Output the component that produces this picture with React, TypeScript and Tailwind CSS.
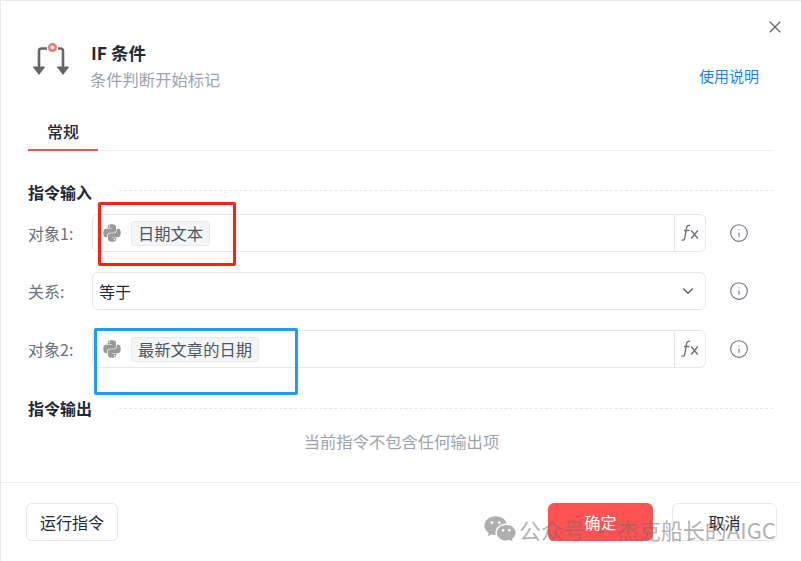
import React from "react";
import { Info, ChevronDown, X } from "lucide-react";
import { FaPython } from "react-icons/fa";
import { RiWechatFill } from "react-icons/ri";

const FxIcon = () => (
  <svg width="20" height="20" viewBox="0 0 20 20" fill="none" stroke="#6b7280" strokeWidth="1.400">
    <path d="M10 2.500c-2-.5-3.100.3-3.400 2L4.800 15c-.3 1.800-1.300 2.500-3.200 2" />
    <path d="M4 7.500h5.500" />
    <path d="M11.200 7.500l6.600 8M17.800 7.500l-6.600 8" />
  </svg>
);

const IfIcon = () => (
  <svg width="38" height="36" viewBox="0 0 38 36" fill="none">
    <path d="M6 28V9Q6 6.500 8.500 6.500H14" stroke="#666" strokeWidth="2.600" />
    <path d="M25 6.500h2.500Q30 6.500 30 9V28" stroke="#666" strokeWidth="2.600" />
    <path d="M-0.500 24.500h13L6 33zM23.500 24.500h13L30 33z" fill="#666" />
    <circle cx="19.500" cy="5.500" r="3.300" fill="#fff" stroke="#f87171" strokeWidth="2.400" />
  </svg>
);

const Tag = ({ text }: { text: string }) => (
  <div className="flex items-center">
    <FaPython className="ml-[2px] text-[20px] text-[#9a9a9a]" />
    <span className="ml-[9px] flex h-[25px] items-center rounded-[4px] border border-[#e9eaec] bg-[#f4f5f6] px-[6px] text-[16.3px] text-[#4b5563]">
      {text}
    </span>
  </div>
);

const Row = ({ label, children }: { label: string; children: React.ReactNode }) => (
  <div className="flex items-center">
    <div className="w-[64px] text-[16px] text-[#6b7280]">{label}</div>
    <div className="flex h-[38px] w-[614px] items-center rounded-[6px] border border-[#e5e7eb]">{children}</div>
    <Info size={20} strokeWidth={1.3} className="ml-[23px] text-[#6b7280]" />
  </div>
);

const TagInput = ({ text }: { text: string }) => (
  <>
    <div className="flex-1 pl-[7px]">
      <Tag text={text} />
    </div>
    <div className="flex h-full w-[31px] items-center justify-center border-l border-[#e5e7eb]">
      <FxIcon />
    </div>
  </>
);

export default function App() {
  return (
    <div
      className="relative h-[561px] w-[801px] overflow-hidden border-t border-l border-[#e5e7eb] bg-white"
      style={{ fontFamily: '"Noto Sans CJK SC", "Liberation Sans", sans-serif' }}
    >
      <button className="absolute top-[16px] right-[16px] text-[#666]">
        <X size={20} strokeWidth={1.4} />
      </button>

      <div className="flex h-[481px] flex-col pr-[28px] pl-[27px]">
        <div className="flex h-[113px] items-start pt-[41px]">
          <div className="mr-[20px] ml-[5px]">
            <IfIcon />
          </div>
          <div className="-mt-[1px] flex-1">
            <div className="text-[17.5px] leading-[24px] font-semibold text-[#1f2937]">IF 条件</div>
            <div className="-ml-[1px] pt-[1px] text-[16.3px] leading-[27px] text-[#9ca3af]">条件判断开始标记</div>
          </div>
          <a className="mt-[22px] mr-[14px] text-[15px] leading-[24px] text-[#1d7ff0]">使用说明</a>
        </div>

        <div className="flex border-b border-[#eceef2]">
          <div className="-mb-px h-[37px] w-[70px] border-b-2 border-[#f25555] pt-[5px] text-center text-[16px] font-medium text-[#1f2937]">
            常规
          </div>
        </div>

        <div className="mt-[29px] flex items-center">
          <div className="w-[91px] text-[16px] leading-[24px] font-semibold text-[#1f2937]">指令输入</div>
          <div className="-mt-[3px] flex-1 border-t border-dashed border-[#e5e7eb]" />
        </div>

        <div className="mt-[10px] flex flex-col gap-[20px]">
          <Row label="对象1:">
            <TagInput text="日期文本" />
          </Row>
          <Row label="关系:">
            <span className="flex-1 pl-[6px] text-[16px] text-[#1f2937]">等于</span>
            <ChevronDown size={18} strokeWidth={1.5} className="mr-[8px] text-[#4b5563]" />
          </Row>
          <Row label="对象2:">
            <TagInput text="最新文章的日期" />
          </Row>
        </div>

        <div className="mt-[28px] flex items-center">
          <div className="w-[91px] text-[16px] leading-[24px] font-semibold text-[#1f2937]">指令输出</div>
          <div className="flex-1 border-t border-dashed border-[#e5e7eb]" />
        </div>

        <div className="mt-[9px] pl-[2px] text-center text-[16.3px] leading-[24px] text-[#9ca3af]">
          当前指令不包含任何输出项
        </div>
      </div>

      <div className="flex h-[79px] items-start border-t border-[#eceef2] pt-[20px] pr-[24px] pl-[25px]">
        <button className="h-[38px] w-[92px] rounded-[6px] border border-[#e5e7eb] text-[16px] text-[#1f2937]">
          运行指令
        </button>
        <button className="ml-auto h-[38px] w-[105px] rounded-[6px] bg-[#ff5252] text-[16px] text-white">确定</button>
        <button className="ml-[19px] h-[38px] w-[105px] rounded-[6px] border border-[#e5e7eb] text-[16px] text-[#1f2937]">
          取消
        </button>
      </div>

      {/* annotations drawn over the screenshot */}
      <div className="pointer-events-none absolute top-[201px] left-[97px] h-[64px] w-[138px] rounded-[2px] border-[3.5px] border-[#ff2015]" />
      <div className="pointer-events-none absolute top-[327px] left-[93px] h-[67px] w-[204px] rounded-[2px] border-[3.5px] border-[#1e9bff]" />

      {/* watermark */}
      <div className="pointer-events-none absolute top-[511px] left-[482px] flex items-center text-[rgba(110,110,110,0.55)]">
        <RiWechatFill className="text-[34px]" />
        <span className="ml-[2px] text-[22px] leading-[30px] whitespace-nowrap">公众号 · 杰克船长的AIGC</span>
      </div>
    </div>
  );
}
